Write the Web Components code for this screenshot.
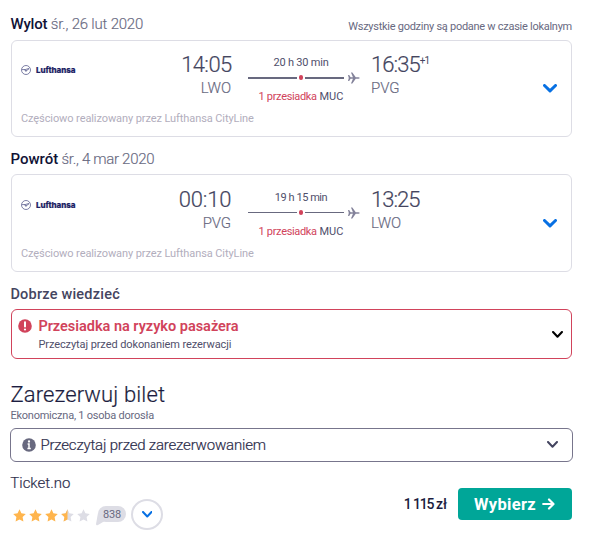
<!DOCTYPE html>
<html lang="pl"><head><meta charset="utf-8"><title>Rezerwacja</title>
<style>
body{margin:0;background:#fff;font-family:Roboto,"Liberation Sans",sans-serif}
</style></head><body><booking-page></booking-page>
<script>
const define=(name,html)=>customElements.define(name,class extends HTMLElement{
  connectedCallback(){
    if(this.shadowRoot)return;
    const t=document.createElement('template');
    t.innerHTML=typeof html==='function'?html(this):html;
    this.attachShadow({mode:'open'}).append(t.content.cloneNode(true));
  }
});

define('chevron-down',el=>{const w=+el.getAttribute('w'),s=+el.getAttribute('stroke')||2,h=w/2+1.8;
return `<style>:host{display:block;flex:none}svg{display:block}</style>
<svg width="${w}" height="${h}" viewBox="0 0 ${w} ${h}"><path d="M${s/2} ${s/2}L${w/2} ${h-s/2-.5}L${w-s/2} ${s/2}" fill="none" stroke="currentColor" stroke-width="${s}" stroke-linecap="round" stroke-linejoin="round"/></svg>`});

define('lufthansa-logo',`<style>:host{display:flex;align-items:center;gap:5px;color:#1b2163;height:11px}
svg{display:block}span{font:800 8px/11px Inter,Roboto,sans-serif;letter-spacing:-.05px;padding-top:1px;-webkit-text-stroke:.2px #1b2163}</style>
<svg width="10" height="10" viewBox="0 0 10 10" fill="none" stroke="#5c608f"><circle cx="5" cy="5" r="4.5" stroke-width=".8"/><path d="M1 4.6H4L8.2 3.4M3.2 4.6L5 6L8 3.8M4.2 6H5.6" stroke-width=".8"/></svg><span>Lufthansa</span>`);

define('flight-path',el=>`<style>:host{display:block;width:112px;padding-top:3px;font-size:11px;line-height:14px;color:#504f6b}
.d,.s{width:106px;text-align:center;white-space:pre}.d{letter-spacing:var(--dls,-.2px)}
.l{display:flex;align-items:center;height:11px;margin:2px 0 7px}
i{height:var(--stroke,2px);background:#68697f}i:first-child{width:49px}i:nth-of-type(2){width:39px}
b{width:5px;height:5px;border-radius:50%;background:#d1435b;margin:0 2px}svg{margin-left:4px;display:block}
.s em{font-style:normal;color:#d1435b;letter-spacing:-.33px}</style>
<div class="d">${el.getAttribute('time')}</div>
<div class="l"><i></i><b></b><i></i><svg width="12" height="12" viewBox="0 0 12 12" fill="#83829a"><path d="M0 3H1.2L2.6 5.2H5L3 .4H4.4L7.8 5.2H10.5Q11.8 5.4 11.8 6Q11.8 6.6 10.5 6.8H7.8L4.4 11.6H3L5 6.8H2.6L1.2 9H0L.8 6Z"/></svg></div>
<div class="s"><em>1 przesiadka</em> MUC</div>`);

define('flight-card',el=>{const a=n=>el.getAttribute(n)||'';return `<style>
:host{display:block;box-sizing:border-box;width:561px;height:97px;border:1px solid #dddde5;border-radius:6px;padding:12px 13px 0 9px;color:#444560}
.r{display:grid;grid-template-columns:137px 73px 112px 1fr 15px;height:58px}
lufthansa-logo{margin-top:11px}flight-path{margin-left:17px}
.t{font-size:22px;line-height:24px;font-weight:300;height:25px;white-space:nowrap;-webkit-text-stroke:.2px}
.c{font-size:15px;line-height:20px;font-weight:300;color:#68697f;letter-spacing:-.1px;-webkit-text-stroke:.15px}
.dep{text-align:right}.arr{margin-left:28px}
.dep .t{letter-spacing:${a('dls')}px;margin-right:${a('dls')}px}.arr .t{letter-spacing:${a('als')}px}
sup{font-size:10px;line-height:0;font-weight:400;vertical-align:8px;letter-spacing:-.8px;margin-left:0;-webkit-text-stroke:0}
chevron-down{color:#0770e3;margin-top:31px}
.n{font-size:11px;line-height:14px;color:#b2aebd;letter-spacing:-.09px;padding-top:.6px}</style>
<div class="r"><lufthansa-logo></lufthansa-logo><div class="dep"><div class="t">${a('dep')}</div><div class="c">${a('from')}</div></div>
<flight-path time="${a('time')}"></flight-path>
<div class="arr"><div class="t">${a('arr')}${a('plus')?`<sup>${a('plus')}</sup>`:''}</div><div class="c">${a('to')}</div></div><chevron-down w="14" stroke="3"></chevron-down></div>
<div class="n">Częściowo realizowany przez Lufthansa CityLine</div>`});

define('leg-heading',`<style>:host{display:flex;justify-content:space-between;height:20px;line-height:20px;font-size:15px;color:#68697f;width:561px}
.m{font-weight:300;-webkit-text-stroke:.15px;letter-spacing:var(--ls,-.2px);white-space:nowrap;margin-left:-.6px}b{font-weight:500;color:#111236;letter-spacing:var(--bls,0);-webkit-text-stroke:0}
.n{font-size:11px;line-height:14px;letter-spacing:-.27px;padding-top:6px;white-space:nowrap}</style>
<span class="m"><b><slot name="title"></slot></b> <slot></slot></span><span class="n"><slot name="note"></slot></span>`);

define('risk-alert',`<style>:host{display:flex;box-sizing:border-box;width:561px;height:50px;border:1px solid #d1435b;border-radius:6px;padding:7px 8px 0 6px}
svg{display:block;margin:2px 6.4px 0 0}div{flex:1}p{margin:0}
.a{font-size:14.5px;line-height:20px;font-weight:600;color:#d1435b;letter-spacing:-.02px}
.b{font-size:11px;line-height:14px;color:#504f6b;letter-spacing:-.09px;margin-top:1px}
chevron-down{color:#000;margin-top:14px}</style>
<svg width="14" height="14" viewBox="0 0 14 14"><circle cx="7" cy="7" r="6.8" fill="#d1435b"/><path d="M7 3.2V7.4" stroke="#fff" stroke-width="2" stroke-linecap="round"/><circle cx="7" cy="10.5" r="1.1" fill="#fff"/></svg>
<div><p class="a">Przesiadka na ryzyko pasażera</p><p class="b">Przeczytaj przed dokonaniem rezerwacji</p></div><chevron-down w="11" stroke="2.1"></chevron-down>`);

define('info-bar',`<style>:host{display:flex;align-items:center;box-sizing:border-box;width:563px;height:34px;margin-left:-1px;border:1px solid #77758c;border-radius:6px;padding:0 14px 0 11px}
svg{display:block;margin-right:4.4px}span{flex:1;font-size:15px;line-height:20px;font-weight:300;-webkit-text-stroke:.2px;color:#2d2e4c;letter-spacing:-.19px}
chevron-down{color:#444560}</style>
<svg width="14" height="14" viewBox="0 0 14 14"><circle cx="7" cy="7" r="6.8" fill="#68697f"/><circle cx="7" cy="3.5" r="1.15" fill="#fff"/><path d="M5.6 6H7V10.6M5.4 10.4H8.8" fill="none" stroke="#fff" stroke-width="1.5"/></svg>
<span>Przeczytaj przed zarezerwowaniem</span><chevron-down w="11" stroke="2"></chevron-down>`);

const star='M6.5 .3L8.4 4.3L12.8 4.9L9.6 8L10.4 12.4L6.5 10.4L2.6 12.4L3.4 8L.2 4.9L4.6 4.3Z';
const halfStar='M6.5 .3V10.4L2.6 12.4L3.4 8L.2 4.9L4.6 4.3Z';
define('star-rating',`<style>:host{display:flex;align-items:center;gap:3px}svg{display:block}</style>`+
 [1,1,1,.5,0].map(v=>`<svg width="13" height="13" viewBox="0 0 13 13"><path d="${star}" fill="${v===1?'#ffb54d':'#dddde5'}"/>${v===.5?`<path d="${halfStar}" fill="#ffb54d"/>`:''}</svg>`).join(''));

define('review-count',`<style>:host{display:block;position:relative;width:28px;height:16px;border-radius:8px;background:#dddde5;font-size:11px;line-height:17px;color:#68697f;text-align:center;letter-spacing:-.2px}
svg{position:absolute;left:-2px;top:7px}span{position:relative}</style><svg width="12" height="13"><path d="M2 0L0 11Q0 13 2 12L12 6Z" fill="#dddde5"/></svg><span><slot></slot></span>`);

define('round-toggle',`<style>:host{display:flex;align-items:center;justify-content:center;box-sizing:border-box;width:32px;height:31px;border:2px solid #dddde5;border-radius:50%;color:#0770e3;padding-top:1px}</style><chevron-down w="10.5" stroke="2"></chevron-down>`);

define('select-button',`<style>:host{display:flex;align-items:center;justify-content:center;box-sizing:border-box;padding-right:1px;gap:6px;width:114px;height:32px;border-radius:4px;background:#00a698;color:#fff;font-size:16.5px;font-weight:700;letter-spacing:.3px}svg{display:block}</style>
<slot></slot><svg width="13" height="12" viewBox="0 0 13 12"><path d="M1.2 6H11M7 1.5L11.5 6L7 10.5" fill="none" stroke="#fff" stroke-width="2.2" stroke-linecap="round" stroke-linejoin="round"/></svg>`);

define('ticket-offer',`<style>:host{display:flex;justify-content:space-between;width:561px;height:58px}
.n{font-size:15px;line-height:20px;font-weight:300;-webkit-text-stroke:.2px;color:#2d2e4c;margin-left:-.7px}
.r{display:flex;align-items:flex-start;padding-left:2.4px;margin-top:6px}star-rating{padding-top:10px}
review-count{margin:7px 0 0 7.6px}round-toggle{margin-left:5px}
.b{display:flex;gap:11px;padding-top:15px}.p{font-size:14px;line-height:33px;font-weight:500;color:#1c1d40;letter-spacing:-1.2px;word-spacing:.3px}.p span{letter-spacing:0}</style>
<div><div class="n">Ticket.no</div><div class="r"><star-rating></star-rating><review-count>838</review-count><round-toggle></round-toggle></div></div>
<div class="b"><span class="p">1 115 <span>zł</span></span><select-button>Wybierz</select-button></div>`);

define('booking-page',`<style>:host{display:flex;flex-direction:column;box-sizing:border-box;width:590px;height:547px;padding:14px 0 0 11px;background:#fff}
.one{margin-top:6px}.h2{margin-top:12px;--ls:-.3px}.two{margin-top:5px;height:98px;padding-top:13px;--stroke:1px;--dls:-.45px}
h3{margin:13px 0 4px -.6px;font-size:14.5px;line-height:20px;font-weight:500;color:#444560;letter-spacing:.22px}
h2{margin:22px 0 0 -.6px;font-size:22px;line-height:28px;font-weight:300;color:#1c1d40;letter-spacing:.13px;-webkit-text-stroke:.2px}
p{margin:0 0 5px -.6px;font-size:11px;line-height:14px;color:#68697f;letter-spacing:-.23px}
ticket-offer{margin-top:11px}</style>
<leg-heading style="--bls:-.2px"><span slot="title">Wylot</span>śr., 26 lut 2020<span slot="note">Wszystkie godziny są podane w czasie lokalnym</span></leg-heading>
<flight-card class="one" dep="14:05" from="LWO" arr="16:35" plus="+1" to="PVG" time="20 h 30 min" dls="-.6" als="-.95"></flight-card>
<leg-heading class="h2"><span slot="title">Powrót</span>śr., 4 mar 2020</leg-heading>
<flight-card class="two" dep="00:10" from="PVG" arr="13:25" to="LWO" time="19 h 15 min" dls="-.2" als="-1"></flight-card>
<h3>Dobrze wiedzieć</h3><risk-alert></risk-alert>
<h2>Zarezerwuj bilet</h2><p>Ekonomiczna, 1 osoba dorosła</p><info-bar></info-bar><ticket-offer></ticket-offer>`);
</script></body></html>
